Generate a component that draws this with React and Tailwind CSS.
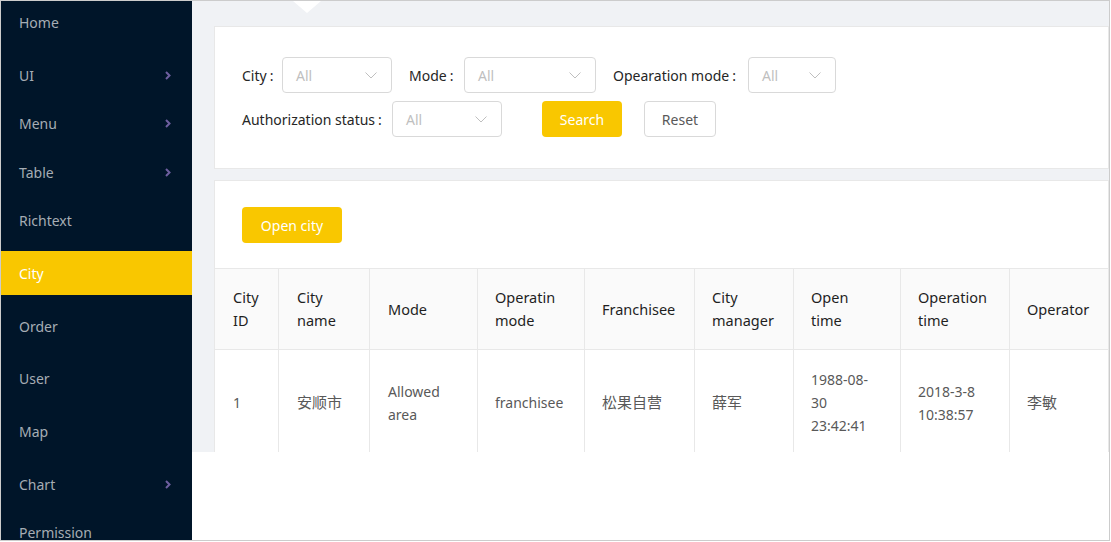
import React from 'react';

const menu = [
  { label: 'Home', cls: 'h-[43px]' },
  { label: 'UI', cls: 'h-[44px] mt-[9px]', sub: true },
  { label: 'Menu', cls: 'h-[44px] mt-[4px]', sub: true },
  { label: 'Table', cls: 'h-[44px] mt-[5px]', sub: true },
  { label: 'Richtext', cls: 'h-[44px] mt-[4px]' },
  { label: 'City', cls: 'h-[44px] mt-[9px]', active: true },
  { label: 'Order', cls: 'h-[44px] mt-[9px]' },
  { label: 'User', cls: 'h-[44px] mt-[8px]' },
  { label: 'Map', cls: 'h-[44px] mt-[9px]' },
  { label: 'Chart', cls: 'h-[44px] mt-[9px]', sub: true },
  { label: 'Permission', cls: 'h-[44px] mt-[4px]' },
];

const columns = [
  { w: 'w-[64px] pl-[18px]', head: ['City', 'ID'], cell: ['1'] },
  { w: 'w-[91px] pl-[18px]', head: ['City', 'name'], cell: ['安顺市'], cjk: true },
  { w: 'w-[108px] pl-[18px]', head: ['Mode'], cell: ['Allowed', 'area'] },
  { w: 'w-[107px] pl-[17px]', head: ['Operatin', 'mode'], cell: ['franchisee'] },
  { w: 'w-[110px] pl-[17px]', head: ['Franchisee'], cell: ['松果自营'], cjk: true },
  { w: 'w-[99px] pl-[17px]', head: ['City', 'manager'], cell: ['薛军'], cjk: true },
  { w: 'w-[107px] pl-[17px]', head: ['Open', 'time'], cell: ['1988-08-', '30', '23:42:41'] },
  { w: 'w-[109px] pl-[17px]', head: ['Operation', 'time'], cell: ['2018-3-8', '10:38:57'] },
  { w: 'flex-1 pl-[17px]', head: ['Operator'], cell: ['李敏'], cjk: true, last: true },
];

const SideArrow = () => (
  <svg width="6" height="9" viewBox="0 0 6 9" className="text-[#6e5fa0]">
    <polyline points="1,1 4.5,4.5 1,8" fill="none" stroke="currentColor" strokeWidth="2" />
  </svg>
);

const DownArrow = () => (
  <svg width="12" height="7" viewBox="0 0 12 7" className="text-[#bfbfbf]">
    <polyline points="0.5,0.5 6,6 11.5,0.5" fill="none" stroke="currentColor" strokeWidth="1" />
  </svg>
);

const Sidebar = () => (
  <aside className="w-[191px] shrink-0 bg-[#001529] overflow-hidden">
    {menu.map((m) => (
      <div
        key={m.label}
        className={`${m.cls} flex items-center justify-between pl-[18px] pr-[21px] text-[14px] ${
          m.active ? 'bg-[#f9c700] text-white' : 'text-[#a6adb4]'
        }`}
      >
        <span>{m.label}</span>
        {m.sub && <SideArrow />}
      </div>
    ))}
  </aside>
);

const Label = ({ w, text }) => (
  <div className={`${w} shrink-0 text-[14px] text-[#262626]`}>
    {text}
    <span className="ml-[3px]">:</span>
  </div>
);

const Select = ({ w }) => (
  <div className={`${w} h-[36px] shrink-0 flex items-center justify-between pl-[13px] pr-[14px] border border-[#d9d9d9] rounded-[4px] bg-white`}>
    <span className="text-[14px] text-[#bfbfbf]">All</span>
    <DownArrow />
  </div>
);

const FilterCard = () => (
  <div className="ml-[22px] bg-white border border-[#e8e8e8] pt-[30px] pb-[31px] pl-[27px]">
    <div className="flex items-center h-[36px]">
      <Label w="w-[40px]" text="City" />
      <Select w="w-[110px]" />
      <div className="ml-[17px]" />
      <Label w="w-[55px]" text="Mode" />
      <Select w="w-[132px]" />
      <div className="ml-[17px]" />
      <Label w="w-[135px]" text="Opearation mode" />
      <Select w="w-[88px]" />
    </div>
    <div className="flex items-center h-[36px] mt-[8px]">
      <Label w="w-[150px]" text="Authorization status" />
      <Select w="w-[110px]" />
      <button className="ml-[40px] w-[80px] h-[36px] rounded-[4px] bg-[#f9c700] text-white text-[14px]">Search</button>
      <button className="ml-[22px] w-[72px] h-[36px] rounded-[4px] border border-[#d9d9d9] bg-white text-[#595959] text-[14px]">Reset</button>
    </div>
  </div>
);

const TableCard = () => (
  <div className="ml-[22px] mt-[11px] bg-white border border-[#e8e8e8] pt-[26px]">
    <button className="ml-[27px] w-[100px] h-[36px] rounded-[4px] bg-[#f9c700] text-white text-[14px]">Open city</button>
    <div className="mt-[25px] border-t border-[#e8e8e8]">
      <div className="flex h-[81px] bg-[#fafafa] border-b border-[#e8e8e8]">
        {columns.map((c, i) => (
          <div
            key={i}
            className={`${c.w} shrink-0 flex items-center ${c.last ? '' : 'border-r border-[#e8e8e8]'}`}
          >
            <div className="text-[14.5px] leading-[23px] text-[#1f1f1f]">
              {c.head.map((l) => (
                <div key={l}>{l}</div>
              ))}
            </div>
          </div>
        ))}
      </div>
      <div className="flex h-[105px]">
        {columns.map((c, i) => (
          <div
            key={i}
            className={`${c.w} shrink-0 flex items-center ${c.last ? '' : 'border-r border-[#e8e8e8]'}`}
          >
            <div className={`${c.cjk ? 'text-[15px]' : 'text-[14px]'} leading-[23px] text-[#595959]`}>
              {c.cell.map((l) => (
                <div key={l}>{l}</div>
              ))}
            </div>
          </div>
        ))}
      </div>
    </div>
  </div>
);

export default function App() {
  return (
    <div className="w-[1110px] h-[541px] border border-[#cccccc] flex overflow-hidden bg-white font-['Noto_Sans','Noto_Sans_CJK_SC',sans-serif]">
      <Sidebar />
      <main className="flex-1 flex flex-col">
        <div className="h-[451px] bg-[#f0f2f5] overflow-hidden">
          <div className="h-[25px]">
            <div className="ml-[101px] w-0 h-0 border-x-[14px] border-x-transparent border-t-[12px] border-t-white" />
          </div>
          <FilterCard />
          <TableCard />
        </div>
      </main>
    </div>
  );
}
